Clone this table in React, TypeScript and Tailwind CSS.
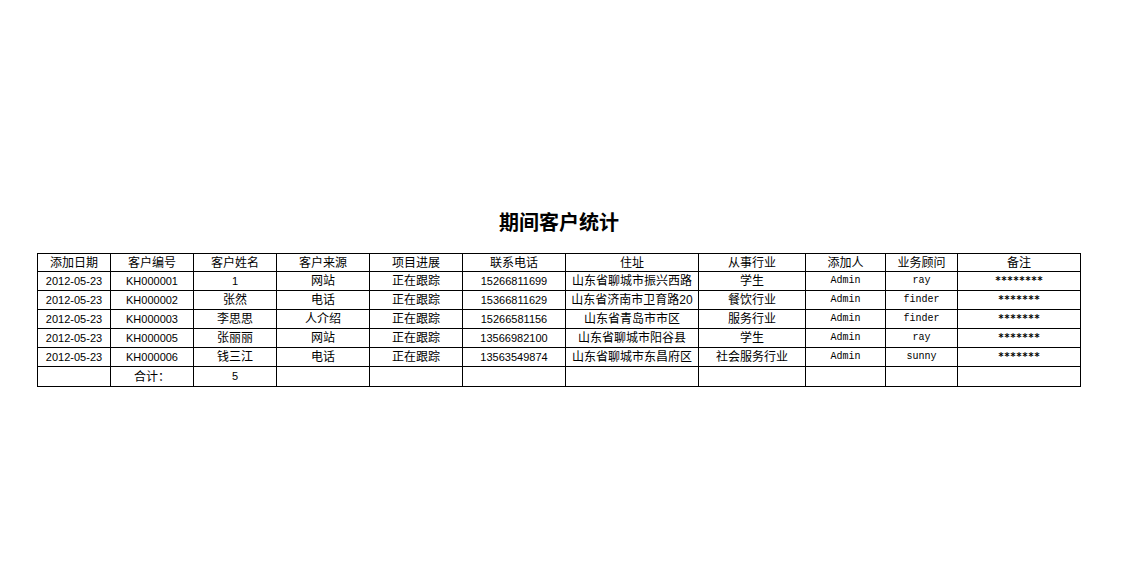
const cols = [73, 83, 83, 93, 93, 103, 133, 107, 80, 72, 123];

const headers = [
  "添加日期",
  "客户编号",
  "客户姓名",
  "客户来源",
  "项目进展",
  "联系电话",
  "住址",
  "从事行业",
  "添加人",
  "业务顾问",
  "备注",
];

const rows = [
  ["2012-05-23", "KH000001", "1", "网站", "正在跟踪", "15266811699", "山东省聊城市振兴西路", "学生", "Admin", "ray", "********"],
  ["2012-05-23", "KH000002", "张然", "电话", "正在跟踪", "15366811629", "山东省济南市卫育路20", "餐饮行业", "Admin", "finder", "*******"],
  ["2012-05-23", "KH000003", "李思思", "人介绍", "正在跟踪", "15266581156", "山东省青岛市市区", "服务行业", "Admin", "finder", "*******"],
  ["2012-05-23", "KH000005", "张丽丽", "网站", "正在跟踪", "13566982100", "山东省聊城市阳谷县", "学生", "Admin", "ray", "*******"],
  ["2012-05-23", "KH000006", "钱三江", "电话", "正在跟踪", "13563549874", "山东省聊城市东昌府区", "社会服务行业", "Admin", "sunny", "*******"],
];

const cjk = "font-['Liberation_Sans','Noto_Sans_CJK_SC',sans-serif] text-[12px]";
const num = "font-['Liberation_Sans','Noto_Sans_CJK_SC',sans-serif] text-[11px]";
const mono = "font-['Liberation_Mono','Noto_Sans_CJK_SC',monospace] text-[10px]";
const stars = "font-['DejaVu_Sans_Mono',monospace] text-[10px] font-bold";

function cellClass(ci: number, v: string) {
  if (ci === 10) return stars;
  if (ci === 8 || ci === 9) return mono;
  if (/^[0-9A-Z-]+$/.test(v)) return num;
  return cjk;
}

export default function App() {
  return (
    <div className="w-[1123px] h-[561px] bg-white text-black flex flex-col pt-[212px] pl-[37px]">
      <div className="w-[1044px] text-center font-['Noto_Sans_CJK_SC',sans-serif] font-bold text-[20px] leading-[20px] h-[20px]">
        期间客户统计
      </div>
      <table className="mt-[21px] w-[1044px] table-fixed border-collapse border border-black">
        <colgroup>
          {cols.map((w, i) => (
            <col key={i} style={{ width: w }} />
          ))}
        </colgroup>
        <thead>
          <tr>
            {headers.map((h) => (
              <td
                key={h}
                className={`border border-black h-[18px] p-0 text-center leading-none ${cjk}`}
              >
                {h}
              </td>
            ))}
          </tr>
        </thead>
        <tbody>
          {rows.map((r, ri) => (
            <tr key={ri}>
              {r.map((v, ci) => (
                <td
                  key={ci}
                  className={`border border-black h-[19px] p-0 text-center leading-none whitespace-nowrap ${cellClass(ci, v)}`}
                >
                  {v}
                </td>
              ))}
            </tr>
          ))}
          <tr>
            <td className="border border-black h-[20px] p-0" />
            <td className={`border border-black h-[20px] p-0 text-center leading-none ${cjk}`}>合计：</td>
            <td className={`border border-black h-[20px] p-0 text-center leading-none ${num}`}>5</td>
            {Array.from({ length: 8 }).map((_, i) => (
              <td key={i} className="border border-black h-[20px] p-0" />
            ))}
          </tr>
        </tbody>
      </table>
    </div>
  );
}
